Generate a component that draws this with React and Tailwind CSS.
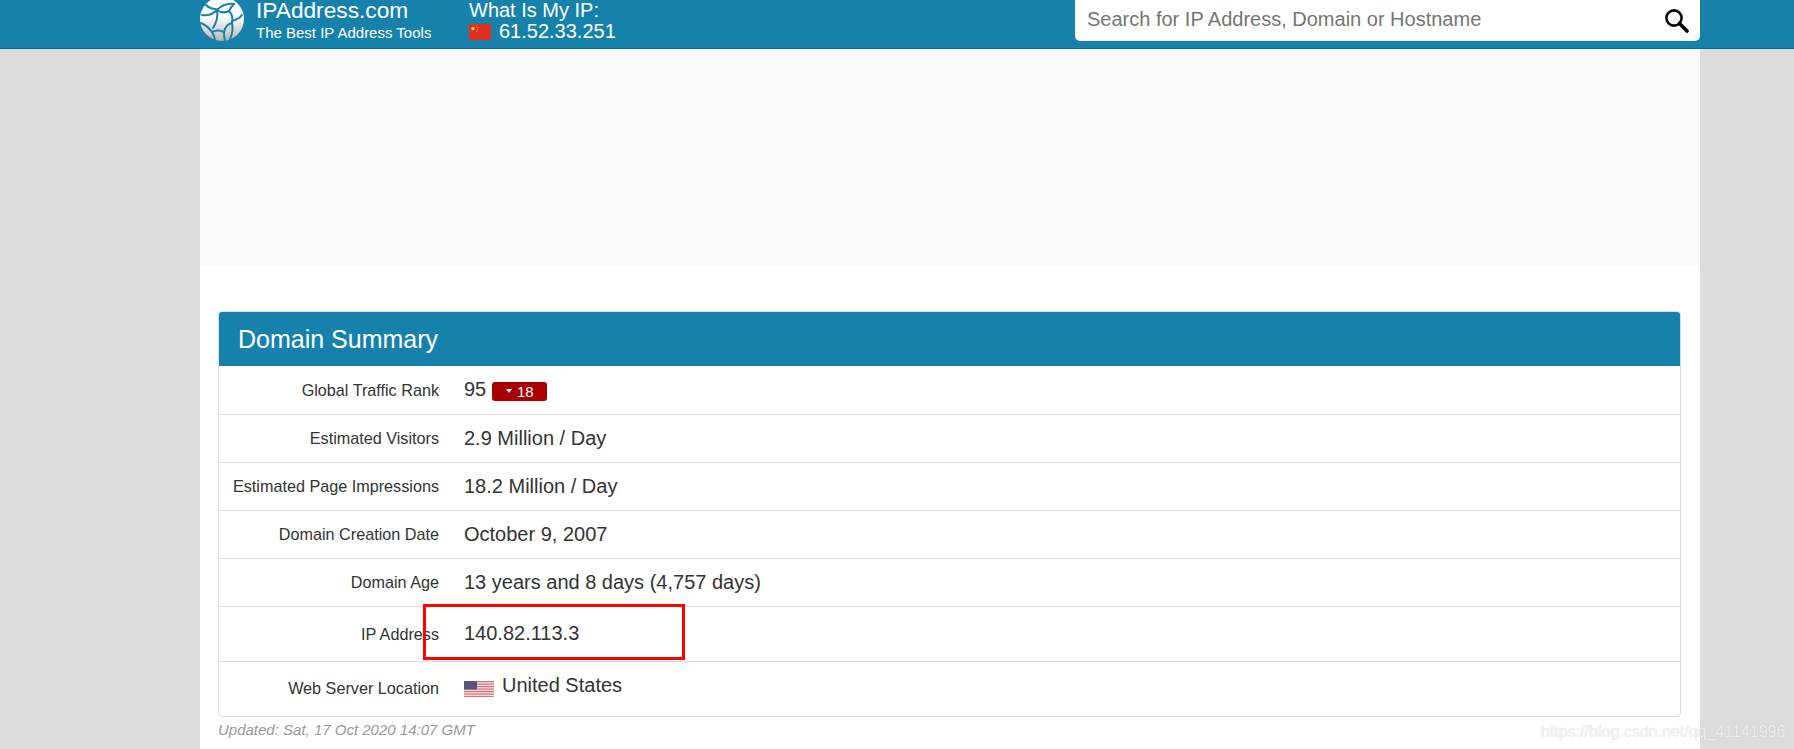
const rows = [
  { label: "Global Traffic Rank", value: "95", badge: "18", h: "h-[49px]" },
  { label: "Estimated Visitors", value: "2.9 Million / Day", h: "h-[48px]" },
  { label: "Estimated Page Impressions", value: "18.2 Million / Day", h: "h-[48px]" },
  { label: "Domain Creation Date", value: "October 9, 2007", h: "h-[48px]" },
  { label: "Domain Age", value: "13 years and 8 days (4,757 days)", h: "h-[48px]" },
  { label: "IP Address", value: "140.82.113.3", h: "h-[55px]" },
];

function Logo() {
  return (
    <svg width="44" height="44" viewBox="0 0 44 44" className="shrink-0">
      <defs>
        <linearGradient id="globe" x1="0" y1="0" x2="0" y2="1">
          <stop offset="0.45" stopColor="#ffffff" />
          <stop offset="1" stopColor="#b4b4b4" />
        </linearGradient>
      </defs>
      <circle cx="22" cy="22" r="22" fill="url(#globe)" />
      <g fill="none" stroke="#1682ac" strokeWidth="2" strokeLinecap="round">
        <path d="M2 18c6 1 11-1 15-5 4-4 9-7 17-6" />
        <path d="M17 13c4 3 8 3 12 1 3 3 4 7 3 12" />
        <path d="M29 14c1-3 3-5 5-7" />
        <path d="M32 26c-4 1-7 4-8 9 0 3 0 6 1 9" />
        <path d="M32 26c1 5 1 10-2 16" />
        <path d="M32 24c4-1 8-3 10-6" />
        <path d="M1 26c5 2 8 5 11 9 2 3 3 6 3 9" />
        <path d="M12 35c4-2 8-2 12 0" />
        <path d="M17 13c1 6 0 12-4 18" />
        <path d="M6 8c3 3 6 4 10 4" />
      </g>
    </svg>
  );
}

function ChinaFlag() {
  return (
    <svg width="22" height="16" viewBox="0 0 22 16" className="shrink-0">
      <rect width="22" height="16" fill="#e0301e" />
      <circle cx="4" cy="4.5" r="1.7" fill="#f7d23e" />
      <circle cx="7.5" cy="2" r="0.5" fill="#f7d23e" />
      <circle cx="8.8" cy="3.8" r="0.5" fill="#f7d23e" />
      <circle cx="8.8" cy="5.8" r="0.5" fill="#f7d23e" />
      <circle cx="7.5" cy="7.4" r="0.5" fill="#f7d23e" />
    </svg>
  );
}

function UsFlag() {
  return (
    <svg width="30" height="16" viewBox="0 0 30 16" className="shrink-0">
      <rect width="30" height="16" fill="#f3dcdc" />
      {[0, 2.5, 5, 7.5, 10, 12.5, 15].map((y) => (
        <rect key={y} y={y} width="30" height="1.2" fill="#d9737a" />
      ))}
      <rect width="13" height="8.5" fill="#55557f" />
    </svg>
  );
}

function SearchIcon() {
  return (
    <svg width="25" height="25" viewBox="0 0 25 25" fill="none" stroke="#000000" className="shrink-0">
      <circle cx="10" cy="10" r="7.6" strokeWidth="2.6" />
      <path d="M15.5 15.5l7.5 7.5" strokeWidth="3.6" strokeLinecap="round" />
    </svg>
  );
}

export default function App() {
  return (
    <div className="relative h-[749px] overflow-hidden bg-[#dcdcdc] font-['Liberation_Sans',Arial,sans-serif]">
      <header className="h-[49px] overflow-hidden bg-[#1682ac] border-b border-[#12698c]">
        <div className="ml-[200px] w-[1500px] flex items-start text-white">
          <div className="-mt-[3px] shrink-0">
            <Logo />
          </div>
          <div className="ml-[12px] w-[213px] shrink-0">
            <div className="text-[22.7px] leading-[20px]">IPAddress.com</div>
            <div className="text-[15px] leading-[18px] mt-[4px]">The Best IP Address Tools</div>
          </div>
          <div className="shrink-0 pt-[1px]">
            <div className="text-[20px] leading-[18px]">What Is My IP:</div>
            <div className="flex items-center gap-[8px] mt-[2px]">
              <ChinaFlag />
              <span className="text-[20px] leading-[22px] -mt-[1px]">61.52.33.251</span>
            </div>
          </div>
          <div className="ml-auto w-[625px] h-[41px] bg-white rounded-b-[5px] flex items-center justify-between pl-[12px] pr-[11px]">
            <span className="text-[20px] leading-[22px] -mt-[3px] text-[#757575]">Search for IP Address, Domain or Hostname</span>
            <SearchIcon />
          </div>
        </div>
      </header>

      <main className="ml-[200px] w-[1500px] h-[700px] bg-white">
        <div className="h-[218px] bg-[#fafafa]" />
        <div className="pl-[18px] pr-[19px] pt-[44px]">
          <section className="border border-[#dddddd] rounded-[4px] overflow-hidden">
            <h2 className="h-[54px] bg-[#1682ac] text-white text-[25px] flex items-center pl-[19px] pt-[2px]">Domain Summary</h2>
            {rows.map((r) => (
              <div key={r.label} className={`flex items-center border-b border-[#dddddd] ${r.h}`}>
                <div className="w-[220px] text-right text-[16.2px] text-[#333333]">{r.label}</div>
                <div className="ml-[25px] flex items-center gap-[6px] text-[20px] text-[#333333] -mt-[2px]">
                  {r.value}
                  {r.badge && (
                    <span className="w-[55px] h-[19px] mt-[4px] bg-[#a80000] rounded-[3px] text-white text-[15px] leading-[19px] flex items-center justify-center gap-[5px]">
                      <span className="w-0 h-0 border-x-[3px] border-x-transparent border-t-[4px] border-t-white" />
                      {r.badge}
                    </span>
                  )}
                </div>
              </div>
            ))}
            <div className="flex items-center h-[54px]">
              <div className="w-[220px] text-right text-[16.2px] text-[#333333] -mt-[1px]">Web Server Location</div>
              <div className="ml-[25px] flex items-center gap-[8px] text-[20px] text-[#333333]">
                <UsFlag />
                <span className="-mt-[8px]">United States</span>
              </div>
            </div>
          </section>
          <p className="mt-[2px] text-[15px] italic text-[#999999]">Updated: Sat, 17 Oct 2020 14:07 GMT</p>
        </div>
      </main>

      <div className="absolute left-[423px] top-[604px] w-[262px] h-[56px] border-[3px] border-[#ff0000]" />
      <div className="absolute left-[1541px] top-[720px] text-[16px] text-white/70 [text-shadow:0_0_1px_rgba(160,160,160,0.5)]">https://blog.csdn.net/qq_41141996</div>
    </div>
  );
}
